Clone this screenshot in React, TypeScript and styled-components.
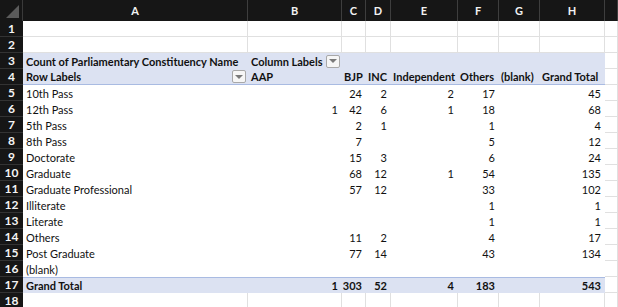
import React from 'react';
import styled, { createGlobalStyle, css } from 'styled-components';

const GlobalStyle = createGlobalStyle`
    body {
        margin: 0;
        background: #ffffff;
        font-family: Lato, "Open Sans", sans-serif;
        overflow: hidden;
    }
`;

const COLS = '23px 225px 94px 24px 25px 67px 41px 41px 65px 1fr';

const Sheet = styled.div`
    width: 618px;
    height: 307px;
    overflow: hidden;
    font-size: 11px;
    color: #111;
`;

const Row = styled.div<{ $head?: boolean }>`
    display: grid;
    grid-template-columns: ${COLS};
    height: ${(p) => (p.$head ? '21px' : '16px')};
`;

const Corner = styled.div`
    background: #161616;
    border-right: 1px solid #3a3a3a;
    position: relative;
    overflow: hidden;

    &::after {
        content: '';
        position: absolute;
        right: 3px;
        bottom: 3px;
        width: 0;
        height: 0;
        border-left: 13px solid transparent;
        border-bottom: 13px solid #5b5b5b;
    }
`;

const ColHead = styled.div`
    background: #161616;
    color: #f2f2f2;
    font-weight: 700;
    font-size: 11px;
    display: flex;
    align-items: center;
    justify-content: center;
    border-right: 1px solid #3e3e3e;
`;

const RowHead = styled.div`
    background: #161616;
    color: #f4f4f4;
    font-weight: 700;
    font-size: 12px;
    display: flex;
    align-items: center;
    justify-content: center;
    border-bottom: 1px solid #333;
`;

type Fill = 'none' | 'head' | 'total';

const Cell = styled.div<{ $right?: boolean; $bold?: boolean; $fill: Fill; $grid?: boolean; $line?: 'top' | 'bottom'; $tight?: boolean }>`
    display: flex;
    align-items: center;
    gap: 3px;
    justify-content: ${(p) => (p.$right ? 'flex-end' : 'flex-start')};
    padding: ${(p) => (p.$tight ? '0 0 0 2px' : '0 4px 0 3px')};
    white-space: nowrap;
    box-sizing: border-box;
    font-weight: ${(p) => (p.$bold ? 700 : 400)};
    background: ${(p) => (p.$fill === 'none' ? '#ffffff' : '#dce2f2')};
    ${(p) =>
        p.$grid &&
        css`
            border-right: 1px solid #e0e0e0;
            border-bottom: 1px solid #e0e0e0;
        `}
    ${(p) => p.$line === 'bottom' && css`border-bottom: 1px solid #a9bbe2;`}
    ${(p) => p.$line === 'top' && css`border-top: 1px solid #a9bbe2;`}
`;

const Spacer = styled.span`
    flex: 1;
`;

const FilterButton = styled.span`
    width: 14px;
    height: 13px;
    flex: none;
    box-sizing: border-box;
    border: 1px solid #a8a8a8;
    border-radius: 2px;
    background: #f6f6f6;
    display: flex;
    align-items: center;
    justify-content: center;

    &::after {
        content: '';
        width: 0;
        height: 0;
        border-left: 4px solid transparent;
        border-right: 4px solid transparent;
        border-top: 4px solid #7a7a7a;
    }
`;

const letters = ['A', 'B', 'C', 'D', 'E', 'F', 'G', 'H', ''];

const parties = ['BJP', 'INC', 'Independent', 'Others', '(blank)', 'Grand Total'];

const data: [string, (number | '')[]][] = [
    ['10th Pass', ['', 24, 2, 2, 17, '', 45]],
    ['12th Pass', [1, 42, 6, 1, 18, '', 68]],
    ['5th Pass', ['', 2, 1, '', 1, '', 4]],
    ['8th Pass', ['', 7, '', '', 5, '', 12]],
    ['Doctorate', ['', 15, 3, '', 6, '', 24]],
    ['Graduate', ['', 68, 12, 1, 54, '', 135]],
    ['Graduate Professional', ['', 57, 12, '', 33, '', 102]],
    ['Illiterate', ['', '', '', '', 1, '', 1]],
    ['Literate', ['', '', '', '', 1, '', 1]],
    ['Others', ['', 11, 2, '', 4, '', 17]],
    ['Post Graduate', ['', 77, 14, '', 43, '', 134]],
    ['(blank)', ['', '', '', '', '', '', '']],
];

const totals: (number | '')[] = [1, 303, 52, 4, 183, '', 543];

const EmptyRow: React.FC<{ n: number }> = ({ n }) => (
    <Row>
        <RowHead>{n}</RowHead>
        {letters.map((l, i) => (
            <Cell key={i} $fill="none" $grid />
        ))}
    </Row>
);

const App: React.FC = () => {
    return (
        <Sheet>
            <GlobalStyle />
            <Row $head>
                <Corner />
                {letters.map((l, i) => (
                    <ColHead key={i}>{l}</ColHead>
                ))}
            </Row>
            <EmptyRow n={1} />
            <EmptyRow n={2} />
            <Row>
                <RowHead>3</RowHead>
                <Cell $fill="head" $bold>Count of Parliamentary Constituency Name</Cell>
                <Cell $fill="head" $bold>
                    Column Labels <FilterButton />
                </Cell>
                {parties.map((p, i) => (
                    <Cell key={i} $fill="head" />
                ))}
                <Cell $fill="none" $grid />
            </Row>
            <Row>
                <RowHead>4</RowHead>
                <Cell $fill="head" $bold $line="bottom" style={{ paddingRight: 2 }}>
                    Row Labels
                    <Spacer />
                    <FilterButton />
                </Cell>
                <Cell $fill="head" $bold $line="bottom">AAP</Cell>
                {parties.map((p, i) => (
                    <Cell key={i} $fill="head" $bold $line="bottom" $tight>
                        {p}
                    </Cell>
                ))}
                <Cell $fill="none" $grid />
            </Row>
            {data.map(([label, values], r) => (
                <Row key={label}>
                    <RowHead>{r + 5}</RowHead>
                    <Cell $fill="none">{label}</Cell>
                    {values.map((v, i) => (
                        <Cell key={i} $fill="none" $right>
                            {v}
                        </Cell>
                    ))}
                    <Cell $fill="none" $grid />
                </Row>
            ))}
            <Row>
                <RowHead>17</RowHead>
                <Cell $fill="total" $bold $line="top">Grand Total</Cell>
                {totals.map((v, i) => (
                    <Cell key={i} $fill="total" $bold $right $line="top">
                        {v}
                    </Cell>
                ))}
                <Cell $fill="none" $grid />
            </Row>
            <EmptyRow n={18} />
        </Sheet>
    );
};

export default App;
